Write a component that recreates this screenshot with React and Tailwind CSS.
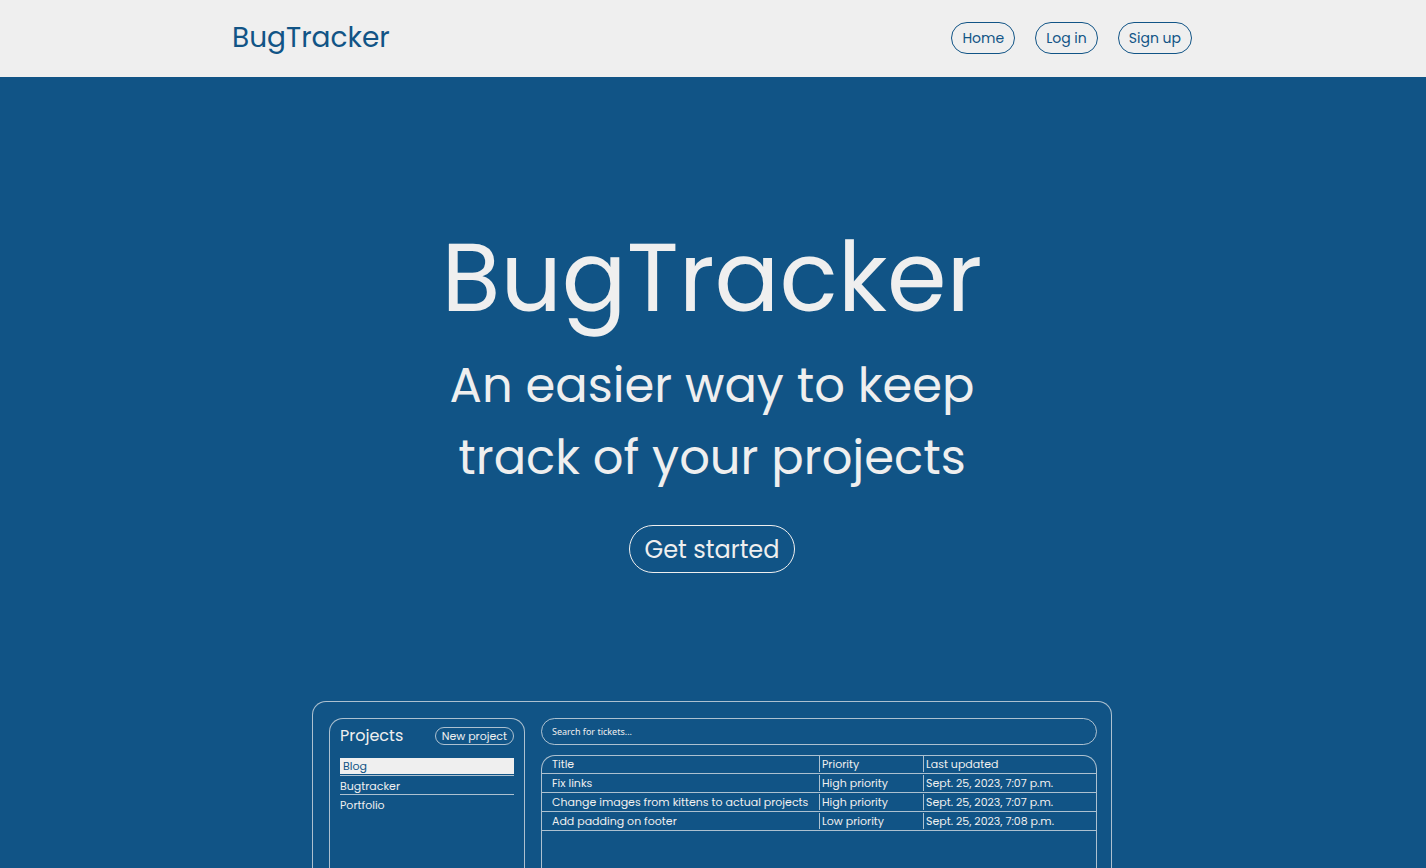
const projects = [
  { name: 'Blog', active: true },
  { name: 'Bugtracker', active: false },
  { name: 'Portfolio', active: false },
];

const tickets = [
  ['Fix links', 'High priority', 'Sept. 25, 2023, 7:07 p.m.'],
  ['Change images from kittens to actual projects', 'High priority', 'Sept. 25, 2023, 7:07 p.m.'],
  ['Add padding on footer', 'Low priority', 'Sept. 25, 2023, 7:08 p.m.'],
];

function NavLink({ children }) {
  return (
    <a
      href="#"
      className="flex h-8 items-center whitespace-nowrap rounded-full border border-[#115486] px-2.5 text-sm text-[#115486]"
    >
      {children}
    </a>
  );
}

function Header() {
  return (
    <header className="bg-[#efefef] pr-0.5">
      <div className="mx-auto flex h-[77px] max-w-[960px] items-center justify-between pb-px">
        <a href="#" className="text-[28px] leading-10 text-[#115486]">
          BugTracker
        </a>
        <nav className="flex gap-5">
          <NavLink>Home</NavLink>
          <NavLink>Log in</NavLink>
          <NavLink>Sign up</NavLink>
        </nav>
      </div>
    </header>
  );
}

function ProjectList() {
  return (
    <section className="w-[196px] shrink-0 rounded-t-[14px] border border-b-0 border-[#efefef]/70 px-2.5 pt-2">
      <div className="flex items-center justify-between">
        <h3 className="text-base leading-[18px]">Projects</h3>
        <button
          type="button"
          className="flex h-[18px] items-center whitespace-nowrap rounded-full border border-[#efefef]/70 px-1.5 text-[11px] leading-4"
        >
          New project
        </button>
      </div>
      <ul className="mt-[13px] text-[11px] leading-4">
        {projects.map((project) => (
          <li key={project.name} className="border-b border-[#efefef]/70 first:pb-px last:border-b-0 not-first:pt-0.5">
            <a href="#" className={project.active ? 'block bg-[#efefef] px-[3px] text-[#115486]' : 'block'}>
              {project.name}
            </a>
          </li>
        ))}
      </ul>
    </section>
  );
}

function TicketTable() {
  return (
    <div className="mt-2.5 flex-1 rounded-t-[14px] border border-b-0 border-[#efefef]/70">
      <table className="w-full table-fixed border-collapse text-left text-[11px] leading-4">
        <colgroup>
          <col />
          <col className="w-[104px]" />
          <col className="w-[173px]" />
        </colgroup>
        <thead>
          <tr className="h-[17px] border-b border-[#efefef]/70">
            <th className="p-0 pl-2.5 font-normal">Title</th>
            <th className="p-0 font-normal">
              <div className="border-l border-[#efefef]/70 pl-0.5">Priority</div>
            </th>
            <th className="p-0 font-normal">
              <div className="border-l border-[#efefef]/70 pl-0.5">Last updated</div>
            </th>
          </tr>
        </thead>
        <tbody>
          {tickets.map(([title, priority, updated]) => (
            <tr key={title} className="h-[19px] border-b border-[#efefef]/70">
              <td className="whitespace-nowrap p-0 pl-2.5">{title}</td>
              <td className="p-0">
                <div className="border-l border-[#efefef]/70 pl-0.5">{priority}</div>
              </td>
              <td className="p-0">
                <div className="whitespace-nowrap border-l border-[#efefef]/70 pl-0.5">{updated}</div>
              </td>
            </tr>
          ))}
        </tbody>
      </table>
    </div>
  );
}

function Preview() {
  return (
    <div className="mt-32 flex w-full max-w-[800px] flex-1 gap-4 rounded-t-[14px] border border-b-0 border-[#efefef]/70 pl-4 pr-3.5 pt-4 text-[#efefef]">
      <ProjectList />
      <section className="flex min-w-0 flex-1 flex-col">
        <input
          type="search"
          aria-label="Search for tickets"
          placeholder="Search for tickets..."
          className="h-[27px] w-full appearance-none rounded-full border border-[#efefef]/70 bg-transparent px-2.5 font-['Noto_Sans',sans-serif] text-[9px] placeholder:text-[#efefef]"
        />
        <TicketTable />
      </section>
    </div>
  );
}

export default function App() {
  return (
    <div className="flex min-h-screen flex-col bg-[#115486] font-['Poppins','Inter',sans-serif]">
      <Header />
      <main className="flex flex-1 flex-col items-center pr-0.5 pt-[129px] text-center text-[#efefef]">
        <h1 className="text-[96px] leading-[144px]">BugTracker</h1>
        <p className="max-w-[600px] text-5xl leading-[72px]">An easier way to keep track of your projects</p>
        <a
          href="#"
          className="mt-[31px] flex h-12 items-center rounded-full border border-[#efefef] px-[15px] pt-0.5 text-2xl"
        >
          Get started
        </a>
        <div className="flex w-full flex-1 justify-center text-left">
          <Preview />
        </div>
      </main>
    </div>
  );
}
